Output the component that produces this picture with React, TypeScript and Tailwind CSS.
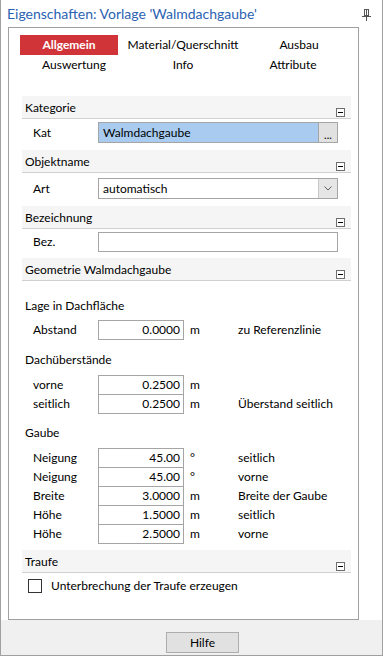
import React from "react";

type SectionHeaderProps = { title: string };

const SectionHeader = ({ title }: SectionHeaderProps) => (
  <div className="relative flex h-[23px] items-center border-b border-[#d0d0d0] bg-[#f5f5f5] pl-[3px] pt-[2px]">
    <span>{title}</span>
    <div className="absolute bottom-[1px] right-[6px] flex h-[9px] w-[9px] items-center justify-center border border-[#6e6e6e] bg-white">
      <div className="h-[1px] w-[5px] bg-black" />
    </div>
  </div>
);

type NumberRowProps = {
  label: string;
  value: string;
  unit: string;
  note?: string;
  first?: boolean;
};

const NumberRow = ({ label, value, unit, note, first }: NumberRowProps) => (
  <div className={`flex h-[20px] items-center ${first ? "" : "-mt-[1px]"}`}>
    <div className="w-[76px] pl-[11px]">{label}</div>
    <div className="flex h-[20px] w-[86px] items-center justify-end border border-[#a5a5a5] bg-white pr-[3px]">
      {value}
    </div>
    <div className="w-[54px] pl-[6px]">{unit}</div>
    <div>{note}</div>
  </div>
);

const PinIcon = () => (
  <svg width="10" height="12" viewBox="0 0 10 12" className="mt-[2px]">
    <rect x="2.5" y="0.5" width="4" height="6" fill="none" stroke="#555" />
    <line x1="4.5" y1="1" x2="4.5" y2="6" stroke="#555" />
    <line x1="0" y1="7.5" x2="9" y2="7.5" stroke="#555" />
    <line x1="4.5" y1="8" x2="4.5" y2="12" stroke="#555" />
  </svg>
);

export default function App() {
  return (
    <div className="flex h-[656px] w-[383px] flex-col border-x border-b border-[#a0a0a0] bg-white font-['Lato',sans-serif] text-[12px] text-black">
      <div className="flex h-[27px] items-center justify-between pl-[6px] pr-[10px]">
        <span className="text-[14px] text-[#2b62b3]">
          Eigenschaften: Vorlage 'Walmdachgaube'
        </span>
        <PinIcon />
      </div>

      <div className="ml-[7px] h-[593px] w-[351px] border border-[#a0a0a0]">
        <div className="ml-[11px] mt-[7px] grid grid-cols-[98px_98px_98px] gap-x-[16px]">
          <div className="flex h-[20px] items-center justify-center bg-[#d13438] font-bold text-white">
            Allgemein
          </div>
          <div className="flex h-[20px] items-center justify-center">
            Material/Querschnitt
          </div>
          <div className="flex h-[20px] items-center justify-center pl-[4px]">
            Ausbau
          </div>
          <div className="flex h-[20px] items-center justify-center pl-[10px]">
            Auswertung
          </div>
          <div className="flex h-[20px] items-center justify-center">Info</div>
          <div className="flex h-[20px] items-center justify-center pr-[8px]">
            Attribute
          </div>
        </div>

        <div className="mt-[21px] pl-[13px] pr-[7px]">
          <SectionHeader title="Kategorie" />
          <div className="mt-[3px] flex h-[21px] items-center">
            <div className="w-[76px] pl-[11px]">Kat</div>
            <div className="flex h-[21px] w-[221px] items-center border border-[#a5a5a5] bg-[#a8cbef] pl-[4px]">
              Walmdachgaube
            </div>
            <div className="-ml-[1px] flex h-[21px] w-[20px] items-end justify-center border border-[#a5a5a5] bg-[#e1e1e1] pb-[2px] text-[11px] leading-none">
              ...
            </div>
          </div>

          <div className="mt-[7px]">
            <SectionHeader title="Objektname" />
          </div>
          <div className="mt-[5px] flex h-[21px] items-center">
            <div className="w-[76px] pl-[11px]">Art</div>
            <div className="flex h-[21px] w-[240px] items-center border border-[#a5a5a5] bg-white">
              <span className="flex-1 pl-[4px]">automatisch</span>
              <div className="flex h-full w-[19px] items-center justify-center border-l border-[#c8c8c8] bg-[#e6e6e6]">
                <svg width="8" height="5" viewBox="0 0 8 5">
                  <polyline
                    points="0.5,0.5 4,4 7.5,0.5"
                    fill="none"
                    stroke="#606060"
                    strokeWidth="1"
                  />
                </svg>
              </div>
            </div>
          </div>

          <div className="mt-[7px]">
            <SectionHeader title="Bezeichnung" />
          </div>
          <div className="mt-[3px] flex h-[20px] items-center">
            <div className="w-[76px] pl-[11px]">Bez.</div>
            <div className="h-[20px] w-[240px] border border-[#a5a5a5] bg-white" />
          </div>

          <div className="mt-[6px]">
            <SectionHeader title="Geometrie Walmdachgaube" />
          </div>

          <div className="mt-[17px] flex h-[16px] items-center pl-[3px]">
            Lage in Dachfläche
          </div>
          <div className="mt-[6px]">
            <NumberRow
              first
              label="Abstand"
              value="0.0000"
              unit="m"
              note="zu Referenzlinie"
            />
          </div>

          <div className="mt-[12px] flex h-[16px] items-center pl-[3px]">
            Dachüberstände
          </div>
          <div className="mt-[7px]">
            <NumberRow first label="vorne" value="0.2500" unit="m" />
            <NumberRow
              label="seitlich"
              value="0.2500"
              unit="m"
              note="Überstand seitlich"
            />
          </div>

          <div className="mt-[11px] flex h-[16px] items-center pl-[3px]">
            Gaube
          </div>
          <div className="mt-[7px]">
            <NumberRow first label="Neigung" value="45.00" unit="°" note="seitlich" />
            <NumberRow label="Neigung" value="45.00" unit="°" note="vorne" />
            <NumberRow
              label="Breite"
              value="3.0000"
              unit="m"
              note="Breite der Gaube"
            />
            <NumberRow label="Höhe" value="1.5000" unit="m" note="seitlich" />
            <NumberRow label="Höhe" value="2.5000" unit="m" note="vorne" />
          </div>

          <div className="mt-[6px]">
            <SectionHeader title="Traufe" />
          </div>
          <div className="mt-[6px] flex h-[14px] items-center pl-[6px]">
            <div className="h-[14px] w-[14px] border border-[#333333] bg-white" />
            <span className="ml-[9px]">Unterbrechung der Traufe erzeugen</span>
          </div>
        </div>
      </div>

      <div className="flex flex-1 items-start bg-[#f0f0f0] pl-[165px] pt-[12px]">
        <button className="flex h-[21px] w-[73px] items-center justify-center border border-[#adadad] bg-[#e1e1e1]">
          Hilfe
        </button>
      </div>
    </div>
  );
}
